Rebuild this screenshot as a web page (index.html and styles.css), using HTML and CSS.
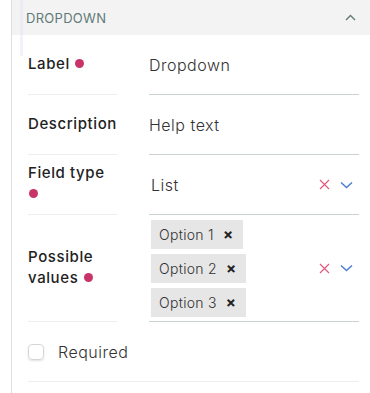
FILE: index.html
```html
<!DOCTYPE html>
<html lang="en">
<head>
  <meta charset="UTF-8" />
  <meta name="viewport" content="width=device-width, initial-scale=1.0" />
  <title>Dropdown field</title>
  <link rel="stylesheet" href="styles.css">
</head>
<body>
  <div class="panel">
    <div class="scroll-hint"></div>
    <div class="section-head">
      <span class="section-title">DROPDOWN</span>
      <svg class="collapse" width="11" height="7" viewBox="0 0 11 7">
        <path d="M1 6 L5.5 1.5 L10 6" fill="none" stroke="#5f7a78" stroke-width="1.4" />
      </svg>
    </div>

    <div class="form">
      <div class="row">
        <div class="label">Label <span class="dot"></span></div>
        <div class="value">Dropdown</div>
      </div>

      <div class="row">
        <div class="label">Description</div>
        <div class="value">Help text</div>
      </div>

      <div class="row">
        <div class="label">Field type<br><span class="dot"></span></div>
        <div class="value select">
          <span class="select-text">List</span>
          <span class="select-icons">
            <svg width="11" height="11" viewBox="0 0 11 11"><path d="M1 1 L10 10 M10 1 L1 10" stroke="#e05a80" stroke-width="1.2" /></svg>
            <svg width="13" height="8" viewBox="0 0 13 8"><path d="M1 1.5 L6.5 6.5 L12 1.5" fill="none" stroke="#4a7fd4" stroke-width="1.5" /></svg>
          </span>
        </div>
      </div>

      <div class="row tall">
        <div class="label">Possible<br>values <span class="dot"></span></div>
        <div class="value select">
          <div class="chips">
            <span class="chip">Option 1 <b>×</b></span>
            <span class="chip">Option 2 <b>×</b></span>
            <span class="chip">Option 3 <b>×</b></span>
          </div>
          <span class="select-icons">
            <svg width="11" height="11" viewBox="0 0 11 11"><path d="M1 1 L10 10 M10 1 L1 10" stroke="#e05a80" stroke-width="1.2" /></svg>
            <svg width="13" height="8" viewBox="0 0 13 8"><path d="M1 1.5 L6.5 6.5 L12 1.5" fill="none" stroke="#4a7fd4" stroke-width="1.5" /></svg>
          </span>
        </div>
      </div>

      <label class="check-row">
        <span class="checkbox"></span>
        <span>Required</span>
      </label>
    </div>
  </div>
</body>
</html>
```

FILE: styles.css
```css
* {
  box-sizing: border-box;
  margin: 0;
  padding: 0;
  font-family: 'Inter', 'Open Sans', sans-serif;
}

body {
  background: #fff;
  padding-left: 11px;
  height: 393px;
  overflow: hidden;
}

.panel {
  border-left: 1px solid #dcdfe0;
  height: 100%;
  position: relative;
}

/* faint scroll shadow over the top left corner */
.scroll-hint {
  position: absolute;
  left: 8px;
  top: 0;
  width: 3px;
  height: 56px;
  background: rgba(225, 228, 242, 0.45);
}

.section-head {
  background: #f3f3f3;
  height: 35px;
  display: flex;
  align-items: center;
  justify-content: space-between;
  padding: 0 14px 0 14px;
}

.section-title {
  font-size: 13px;
  color: #5f7a78;
  letter-spacing: 0.3px;
}

.form {
  padding: 0 11px 0 16px;
}

.row {
  display: grid;
  grid-template-columns: 89px 1fr;
  column-gap: 32px;
  height: 60px;
}

.row.tall {
  height: 107px;
}

.label {
  align-content: center;
  font-size: 15px;
  font-weight: 500;
  line-height: 21px;
  letter-spacing: 0.6px;
  color: #222;
  border-bottom: 1px solid #eeeeee;
  padding-bottom: 3px;
  white-space: nowrap;
}

.dot {
  display: inline-block;
  width: 9px;
  height: 9px;
  border-radius: 50%;
  background: #c8336a;
  vertical-align: 1px;
  margin-left: 1px;
}

.value {
  display: flex;
  align-items: center;
  font-size: 16px;
  font-weight: 300;
  letter-spacing: 0.5px;
  color: #333;
  border-bottom: 1px solid #c9d1d1;
}

.select {
  justify-content: space-between;
  padding-left: 2px;
}

.select-icons {
  display: flex;
  align-items: center;
  gap: 10px;
  padding-right: 6px;
}

.chips {
  display: flex;
  flex-direction: column;
  align-items: flex-start;
  gap: 5px;
}

.chip {
  background: #e6e6e6;
  height: 29px;
  display: flex;
  align-items: center;
  padding: 0 10px 0 8px;
  font-size: 14px;
  letter-spacing: 0.3px;
  color: #333;
}

.chip b {
  margin-left: 9px;
  font-size: 15px;
  font-weight: 700;
  color: #222;
}

.check-row {
  display: flex;
  align-items: center;
  gap: 14px;
  height: 60px;
  font-size: 16px;
  font-weight: 300;
  letter-spacing: 0.5px;
  color: #333;
  border-bottom: 1px solid #eeeeee;
}

.checkbox {
  width: 16px;
  height: 16px;
  border: 1px solid #d6d6d6;
  border-radius: 4px;
  box-shadow: 0 1px 2px rgba(0, 0, 0, 0.12);
}
```
